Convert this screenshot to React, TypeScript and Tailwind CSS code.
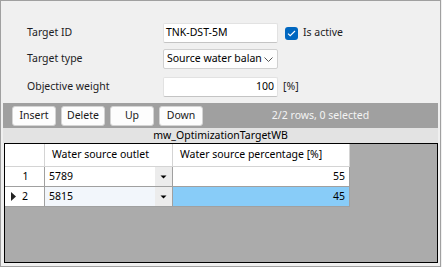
import React from 'react';

const font = "font-['Noto_Sans','DejaVu_Sans',sans-serif]";

const FormRow: React.FC<{ label: string; className?: string; children: React.ReactNode }> = ({ label, className, children }) => (
  <div className={`flex items-center h-[20px] ${className ?? ''}`}>
    <div className="w-[136px] text-[#1c1c24]">{label}</div>
    {children}
  </div>
);

const ToolButton: React.FC<{ label: string }> = ({ label }) => (
  <button className="w-[44px] h-[20px] bg-[#fdfdfd] border border-[#d4d4d4] rounded-[3px] text-[#1a1a1a] leading-none">
    {label}
  </button>
);

const DropArrow = () => (
  <div className="w-[17px] h-full bg-[#ececec] flex items-center justify-center">
    <svg width="7" height="4" viewBox="0 0 7 4">
      <path d="M0.5 0.5h6L3.5 3.5z" fill="#000" />
    </svg>
  </div>
);

export default function App() {
  return (
    <div className={`w-[442px] h-[267px] bg-[#f0f0f0] text-[10.5px] ${font}`}>
      <div className="w-[441px] h-[267px] border border-[#a0a0a0] flex flex-col">
        {/* form */}
        <div className="pt-[22px] pl-[26px]">
          <FormRow label="Target ID">
            <div className="w-[115px] h-[20px] bg-white border border-[#e2e2e2] border-b-[#c4c4c4] rounded-[2px] pl-[2px] flex items-center text-black">
              TNK-DST-5M
            </div>
            <div className="ml-[7px] w-[13px] h-[13px] rounded-[3px] bg-[#0067c0] flex items-center justify-center">
              <svg width="9" height="7" viewBox="0 0 9 7">
                <path d="M1 3.6l2.2 2.1L8 1" stroke="#fff" strokeWidth="1.1" fill="none" />
              </svg>
            </div>
            <span className="ml-[5px] text-[#1c1c24]">Is active</span>
          </FormRow>
          <FormRow label="Target type" className="mt-[6px]">
            <div className="w-[115px] h-[20px] bg-[#fdfdfd] border border-[#d0d0d0] rounded-[2px] pl-[3px] pr-[4px] flex items-center text-black">
              <span className="flex-1 whitespace-nowrap">Source water balan</span>
              <svg width="9" height="5" viewBox="0 0 9 5">
                <path d="M0.5 0.5l4 4 4-4" stroke="#555" strokeWidth="1" fill="none" />
              </svg>
            </div>
          </FormRow>
          <FormRow label="Objective weight" className="mt-[8px]">
            <div className="w-[115px] h-[20px] bg-white border border-[#e2e2e2] border-b-[#c4c4c4] rounded-[2px] pr-[3px] flex items-center justify-end text-black">
              100
            </div>
            <span className="ml-[5px] text-[#1c1c24]">[%]</span>
          </FormRow>
        </div>

        {/* toolbar */}
        <div className="mt-[6px] mx-[2px] h-[25px] bg-[#a0a0a0] flex items-center pl-[9px]">
          <div className="flex gap-[5px]">
            <ToolButton label="Insert" />
            <ToolButton label="Delete" />
            <ToolButton label="Up" />
            <ToolButton label="Down" />
          </div>
          <div className="flex-1 text-center text-[#f4f4f4]">2/2 rows, 0 selected</div>
        </div>
        <div className="mx-[2px] h-[15px] bg-[#e3e3e3] flex items-center justify-center text-black leading-none">
          mw_OptimizationTargetWB
        </div>

        {/* grid */}
        <div className="ml-[3px] w-[434px] flex-1 mb-[3px] border border-black bg-[#ababab] text-black">
          <div className="flex h-[23px]">
            <div className="w-[40px] bg-white border-r border-b border-[#d4d4d4]" />
            <div className="w-[128px] bg-white border-r border-b border-[#d4d4d4] pl-[7px] flex items-center">
              Water source outlet
            </div>
            <div className="w-[177px] bg-white border-r border-b border-[#d4d4d4] pl-[7px] flex items-center">
              Water source percentage [%]
            </div>
          </div>
          <div className="flex h-[20px]">
            <div className="w-[40px] bg-white border-r border-b border-[#a0a0a0] flex items-center justify-center pl-[2px]">1</div>
            <div className="w-[128px] bg-white border-r border-b border-[#a0a0a0] flex items-center">
              <span className="flex-1 pl-[4px]">5789</span>
              <DropArrow />
            </div>
            <div className="w-[177px] bg-white border-r border-b border-[#a0a0a0] flex items-center justify-end pr-[4px]">55</div>
          </div>
          <div className="flex h-[20px]">
            <div className="w-[40px] bg-white border-r border-b border-[#a0a0a0] flex items-center pl-[6px]">
              <svg width="5" height="9" viewBox="0 0 5 9">
                <path d="M0 0l5 4.5L0 9z" fill="#222" />
              </svg>
              <span className="ml-[6px]">2</span>
            </div>
            <div className="w-[128px] bg-[#f2f6fb] border-r border-b border-[#a0a0a0] flex items-center">
              <span className="flex-1 pl-[4px]">5815</span>
              <DropArrow />
            </div>
            <div className="w-[177px] bg-[#88ccf8] border-r border-b border-[#a0a0a0] flex items-center justify-end pr-[4px]">45</div>
          </div>
        </div>
      </div>
    </div>
  );
}
